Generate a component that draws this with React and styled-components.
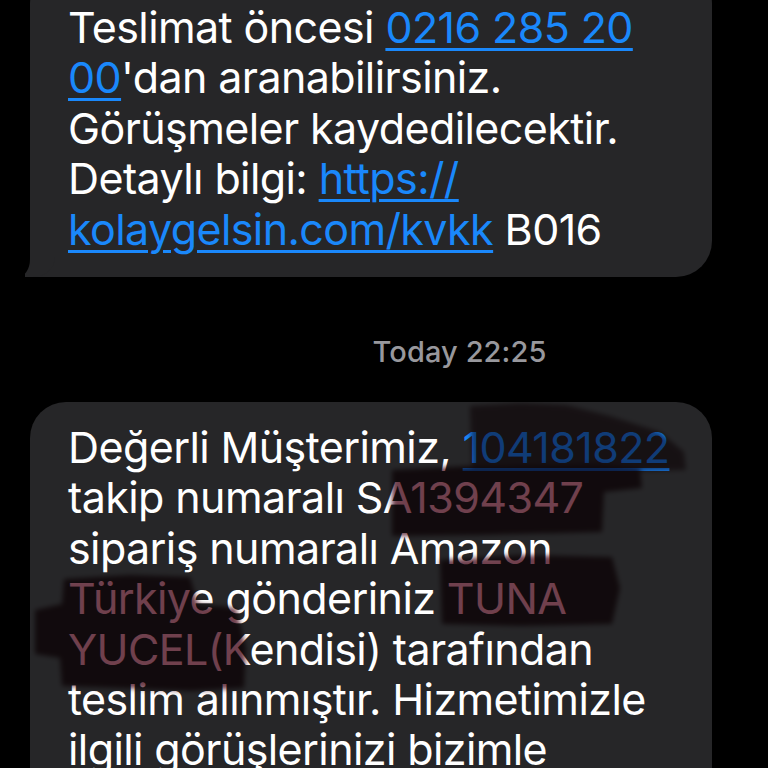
import React from "react";
import styled, { createGlobalStyle } from "styled-components";

const Global = createGlobalStyle`
  html, body {
    margin: 0;
    padding: 0;
    background: #000;
    overflow: hidden;
    height: 768px;
  }
  body {
    font-family: Inter, "Noto Sans", "Liberation Sans", sans-serif;
    -webkit-font-smoothing: antialiased;
  }
`;

const Thread = styled.div`
  width: 768px;
  display: flex;
  flex-direction: column;
  margin-top: -32px;
`;

const Row = styled.div`
  display: flex;
  padding: 0 56px 0 30px;
`;

const Bubble = styled.div`
  position: relative;
  flex: 1;
  background: #262628;
  border-radius: 36px;
  padding: ${(p) => p.$pad};
  color: #fff;
  font-size: 43px;
  line-height: 50.4px;
  letter-spacing: -0.6px;
  ${(p) =>
    p.$tail &&
    `
    border-bottom-left-radius: 0;
    &::before {
      content: "";
      position: absolute;
      bottom: 0;
      left: -5px;
      width: 30px;
      height: 26px;
      background: #262628;
      border-bottom-right-radius: 22px 20px;
    }
    &::after {
      content: "";
      position: absolute;
      bottom: 0;
      left: -16px;
      width: 16px;
      height: 30px;
      background: #000;
      border-bottom-right-radius: 12px 18px;
    }
  `}
`;

const Line = styled.span`
  display: block;
  white-space: nowrap;
`;

const Link = styled.span`
  color: #1a88fb;
  text-decoration: underline;
  text-decoration-thickness: 3px;
  text-underline-offset: 5px;
`;

const Stamp = styled.div`
  padding: 59px 0 34px 151px;
  text-align: center;
  color: #98989d;
  font-size: 29px;
  line-height: 32px;
  font-weight: 500;
  letter-spacing: 0.1px;
`;

const Redaction = styled.svg`
  position: absolute;
  left: 0;
  top: 0;
  width: 682px;
  height: 400px;
  mix-blend-mode: multiply;
  pointer-events: none;
`;

export default function App() {
  return (
    <>
      <Global />
      <Thread>
        <Row>
          <Bubble $tail $pad="34px 30px 23px 38px">
            <Line>
              Teslimat öncesi <Link>0216 285 20</Link>
            </Line>
            <Line>
              <Link>00</Link>'dan aranabilirsiniz.
            </Line>
            <Line>Görüşmeler kaydedilecektir.</Line>
            <Line>
              Detaylı bilgi: <Link>https://</Link>
            </Line>
            <Line>
              <Link>kolaygelsin.com/kvkk</Link> B016
            </Line>
          </Bubble>
        </Row>
        <Stamp>Today 22:25</Stamp>
        <Row>
          <Bubble $pad="20px 30px 30px 38px">
            <Line>
              Değerli Müşterimiz, <Link>104181822</Link>
            </Line>
            <Line>takip numaralı SA1394347</Line>
            <Line>sipariş numaralı Amazon</Line>
            <Line>Türkiye gönderiniz TUNA</Line>
            <Line>YUCEL(Kendisi) tarafından</Line>
            <Line>teslim alınmıştır. Hizmetimizle</Line>
            <Line>ilgili görüşlerinizi bizimle</Line>
            <Redaction viewBox="30 402 682 400">
              <defs>
                <filter id="soft" x="-10%" y="-10%" width="120%" height="120%">
                  <feGaussianBlur stdDeviation="2.5" />
                </filter>
              </defs>
              <g fill="#70404e" filter="url(#soft)">
                <path
                  opacity="0.75"
                  d="M470,406 L520,403 L566,405 L610,416 L660,432 L684,452 L686,470 L600,472 L472,472 Z"
                />
                <path d="M392,470 L470,466 L600,464 L640,468 L642,488 L604,492 L602,532 L480,535 L392,536 Z" />
                <path d="M440,560 L520,555 L612,557 L620,588 L612,624 L520,626 L442,624 Z" />
                <path d="M35,610 L62,604 L64,579 L130,575 L190,577 L198,604 L236,608 L246,648 L244,688 L190,691 L120,688 L62,686 L60,658 L35,654 Z" />
              </g>
            </Redaction>
          </Bubble>
        </Row>
      </Thread>
    </>
  );
}
